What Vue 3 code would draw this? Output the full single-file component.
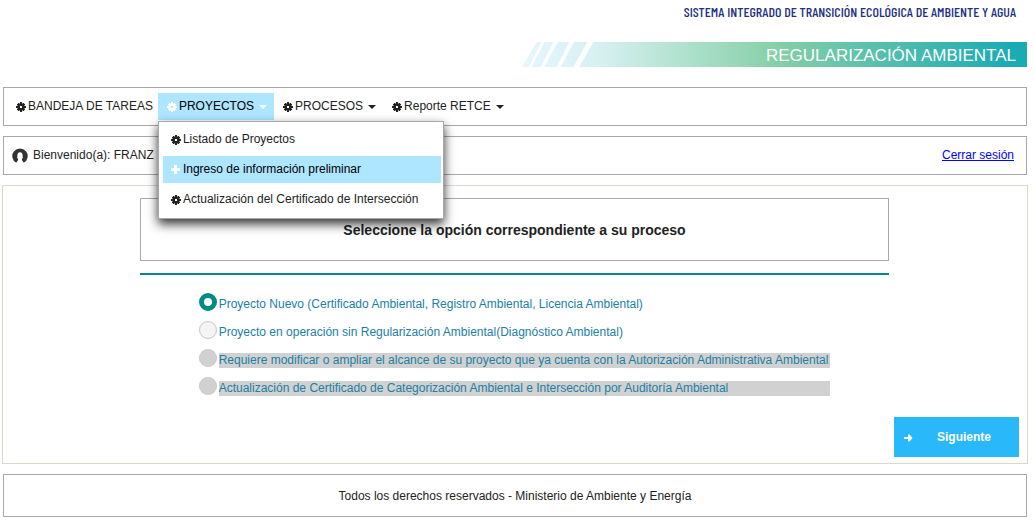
<template>
  <div class="page">
    <header class="site-header">
      <p class="system-name">SISTEMA INTEGRADO DE TRANSICIÓN ECOLÓGICA DE AMBIENTE Y AGUA</p>
      <div class="banner">
        <svg class="banner-stripes" viewBox="0 0 72 25" aria-hidden="true">
          <path
            d="M0 0H14.7L0 25ZM19.3 0H22.7L9.3 25H6.7ZM31.3 0H36L22 25H18.7ZM47.3 0H52L38.7 25H34.7ZM65.3 0H71.3L57.3 25H51.3Z"
          />
        </svg>
        <h1>REGULARIZACIÓN AMBIENTAL</h1>
      </div>
    </header>

    <nav class="box menubar" aria-label="Principal">
      <div v-for="item in menuItems" :key="item.label" class="menu-entry">
        <button
          type="button"
          class="menu-button"
          :class="{ active: openMenu === item.label, plain: !item.hasMenu }"
          @click="toggleMenu(item)"
        >
          <svg class="icon" viewBox="0 0 10 10" aria-hidden="true"><path :d="gearPath" fill-rule="evenodd" /></svg>
          <span>{{ item.label }}</span>
          <svg v-if="item.hasMenu" class="caret" viewBox="0 0 8 4" aria-hidden="true"><path d="M0 0H8L4 4Z" /></svg>
        </button>

        <ul v-if="item.children && openMenu === item.label" class="submenu">
          <li v-for="child in item.children" :key="child.label">
            <a href="#" class="submenu-link" :class="{ active: child.active }" @click.prevent>
              <svg class="icon" viewBox="0 0 10 10" aria-hidden="true">
                <path :d="child.active ? plusPath : gearPath" fill-rule="evenodd" />
              </svg>
              <span>{{ child.label }}</span>
            </a>
          </li>
        </ul>
      </div>
    </nav>

    <section class="box user-bar">
      <svg class="user-icon" viewBox="0 0 16 16" aria-hidden="true">
        <path
          d="M4.2 14.8A7.7 7.7 0 1 1 11.8 14.8L10 12.2C9.8 11.6 10 11 10.3 10.3C10.9 9.8 11 9 10.6 8.2C10.8 5.6 9.8 4.2 8 4.2S5.2 5.6 5.4 8.2C5 9 5.1 9.8 5.7 10.3C6 11 6.2 11.6 6 12.2Z"
        />
      </svg>
      <span>Bienvenido(a): FRANZ</span>
      <a href="#" class="logout" @click.prevent>Cerrar sesión</a>
    </section>

    <main class="content">
      <h2 class="box question">Seleccione la opción correspondiente a su proceso</h2>

      <div class="options" role="radiogroup" aria-label="Tipo de proceso">
        <div v-for="option in options" :key="option.id" class="option">
          <input
            :id="option.id"
            v-model="selected"
            type="radio"
            name="proceso"
            :value="option.id"
            :disabled="option.disabled"
          />
          <label :for="option.id" :class="{ disabled: option.disabled }">{{ option.label }}</label>
        </div>
      </div>

      <div class="actions">
        <button type="button" class="next-button">
          <svg class="icon" viewBox="0 0 10 10" aria-hidden="true"><path d="M1 5H5V2.5H6.5L9.5 6L6.5 9.5H5V7H1Z" /></svg>
          <span>Siguiente</span>
        </button>
      </div>
    </main>

    <footer class="box site-footer">Todos los derechos reservados - Ministerio de Ambiente y Energía</footer>
  </div>
</template>

<script setup>
import { ref } from 'vue';

const gearPath =
  'M2 1H3V1.5H4V0H6V1.5H7V1H8V1.5L8.5 2H9V3H8.5V4H10V6H8.5V7H9V8H8.5L8 8.5V9H7V8.5H6V10H4V8.5H3V9H2V8.5L1.5 8H1V7H1.5V6H0V4H1.5V3H1V2H1.5L2 1.5ZM4 4V6H6V4Z';
const plusPath = 'M3 0H6V3H9V6H6V9H3V6H0V3H3Z';

const menuItems = [
  { label: 'BANDEJA DE TAREAS', hasMenu: false },
  {
    label: 'PROYECTOS',
    hasMenu: true,
    children: [
      { label: 'Listado de Proyectos' },
      { label: 'Ingreso de información preliminar', active: true },
      { label: 'Actualización del Certificado de Intersección' },
    ],
  },
  { label: 'PROCESOS', hasMenu: true },
  { label: 'Reporte RETCE', hasMenu: true },
];

const options = [
  {
    id: 'nuevo',
    label: 'Proyecto Nuevo (Certificado Ambiental, Registro Ambiental, Licencia Ambiental)',
  },
  {
    id: 'operacion',
    label: 'Proyecto en operación sin Regularización Ambiental(Diagnóstico Ambiental)',
  },
  {
    id: 'modificar',
    label: 'Requiere modificar o ampliar el alcance de su proyecto que ya cuenta con la Autorización Administrativa Ambiental',
    disabled: true,
  },
  {
    id: 'actualizacion',
    label: 'Actualización de Certificado de Categorización Ambiental e Intersección por Auditoría Ambiental',
    disabled: true,
  },
];

const openMenu = ref('PROYECTOS');
const selected = ref('nuevo');

const toggleMenu = (item) => {
  if (!item.hasMenu) return;
  openMenu.value = openMenu.value === item.label ? '' : item.label;
};
</script>

<style>
body {
  margin: 0;
  background: #fff;
}
</style>

<style scoped>
.page {
  padding: 4px 6px 0 2px;
  font-family: 'Liberation Sans', Arial, sans-serif;
  font-size: 12px;
  line-height: 15px;
  color: #222;
}

.page * {
  box-sizing: border-box;
}

button {
  font: inherit;
  cursor: pointer;
}

.icon {
  width: 10px;
  height: 10px;
  flex: none;
  fill: currentColor;
}

.box {
  margin: 0 1px;
  border: 1px solid #a8a8a8;
}

.site-header {
  display: flex;
  flex-direction: column;
  align-items: flex-end;
  gap: 22px;
  padding: 0 1px 20px 0;
}

.system-name {
  margin: 0 11px 0 0;
  font-family: 'Barlow Condensed', 'Roboto Condensed', 'Liberation Sans', sans-serif;
  font-size: 14px;
  line-height: 16px;
  font-weight: 500;
  color: #232f83;
}

.banner {
  display: flex;
  justify-content: space-between;
  width: 505px;
  max-width: 100%;
  height: 25px;
  background: linear-gradient(90deg, #e5f6ff 0%, #d6f0f0 16%, #84cfa6 51%, #1aabb5 97%);
}

.banner-stripes {
  width: 72px;
  height: 25px;
  fill: #fff;
}

.banner h1 {
  margin: 0;
  padding-right: 11px;
  font-size: 17px;
  line-height: 27px;
  font-weight: 400;
  color: #fff;
}

.menubar {
  display: flex;
  min-height: 39px;
  padding: 5px 3px;
}

.menu-entry {
  position: relative;
}

.menu-button {
  display: flex;
  align-items: center;
  gap: 2px;
  height: 27px;
  padding: 0 7px 0 9px;
  border: 0;
  background: none;
  color: #222;
}

.menu-button.plain {
  padding-right: 5px;
}

.menu-button .icon {
  margin-top: 1px;
}

.menu-button.active {
  background: #aee5ff;
  color: #fff;
}

.menu-button.active span {
  color: #000;
}

.caret {
  width: 8px;
  height: 4px;
  margin-left: 3px;
  fill: currentColor;
}

.submenu {
  position: absolute;
  top: 28px;
  left: 0;
  z-index: 10;
  display: flex;
  flex-direction: column;
  gap: 3px;
  width: 286px;
  margin: 0;
  padding: 4px 2px 5px 4px;
  list-style: none;
  background: #fff;
  border: 1px solid #a8a8a8;
  box-shadow: 0 5px 10px rgba(0, 0, 0, 0.8);
}

.submenu-link {
  display: flex;
  align-items: center;
  gap: 2px;
  height: 27px;
  padding: 0 8px;
  color: #222;
  text-decoration: none;
}

.submenu-link .icon {
  margin-top: 1px;
}

.submenu-link.active {
  background: #aee5ff;
  color: #fff;
}

.submenu-link.active span {
  color: #000;
}

.user-bar {
  display: flex;
  align-items: center;
  min-height: 39px;
  margin-top: 10px;
  padding: 0 12px 0 8px;
}

.user-icon {
  width: 16px;
  height: 16px;
  margin-right: 5px;
  fill: #333;
}

.logout {
  margin-left: auto;
  color: #00f;
}

.content {
  margin-top: 10px;
  padding: 12px 8px 6px;
  border: 1px solid #ddd8c8;
}

.question {
  margin: 0 130px 0 129px;
  padding: 24px 10px 22px;
  font-size: 14px;
  line-height: 15px;
  text-align: center;
}

.options {
  display: grid;
  gap: 9px;
  margin: 12px 130px 0 129px;
  padding: 18px 0 21px;
  border-top: 2px solid #008b85;
  justify-content: center;
}

.option {
  display: flex;
  gap: 2px;
  min-height: 19px;
}

.option input {
  appearance: none;
  flex: none;
  width: 18px;
  height: 18px;
  margin: 0;
  border: 1px solid #c8c8c8;
  border-radius: 50%;
  background: #f4f4f4;
}

.option input:checked {
  border: 5px solid #008b85;
  background: #fff;
}

.option input:disabled {
  background: #d1d1d1;
}

.option label {
  flex: 1;
  align-self: flex-end;
  padding-right: 2px;
  color: #2080a4;
}

.option label.disabled {
  background: #d1d1d1;
}

.actions {
  display: flex;
  justify-content: flex-end;
}

.next-button {
  display: flex;
  align-items: center;
  width: 125px;
  height: 40px;
  padding: 0 9px;
  border: 0;
  background: #29b9fb;
  color: #fff;
  font-weight: 700;
}

.next-button span {
  flex: 1;
  padding-left: 5px;
  text-align: center;
}

.site-footer {
  margin-top: 10px;
  padding: 14px 10px 12px;
  text-align: center;
}
</style>
